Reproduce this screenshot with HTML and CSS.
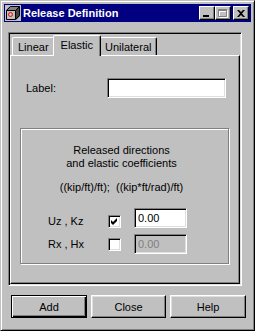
FILE: index.html
```html
<!DOCTYPE html>
<html>
<head>
<meta charset="utf-8">
<link rel="stylesheet" href="styles.css">
</head>
<body>
<div class="window">
  <div class="titlebar">
    <svg class="app-icon" width="16" height="16" viewBox="0 0 16 16">
      <rect x="0" y="0" width="16" height="16" fill="#c0c0c0"/>
      <path d="M1 5 L5 1 H15 L11 5 Z" fill="#808080"/>
      <path d="M11 5 L15 1 V11 L11 15 Z" fill="#404040"/>
      <path d="M1.5 5.5 H10.5 V14.5 H1.5 Z" fill="#c0c0c0" stroke="#000"/>
      <path d="M1.5 5.5 L5.5 1.5 H14.5 V10.5 L10.5 14.5 M10.5 5.5 L14.5 1.5" fill="none" stroke="#000"/>
      <circle cx="5.5" cy="9.5" r="2" fill="none" stroke="#ff0000"/>
    </svg>
    <span class="title">Release Definition</span>
    <div class="tb-buttons">
      <div class="tb-btn">
        <svg width="8" height="7" viewBox="0 0 8 7"><rect x="0" y="5" width="6" height="2" fill="#000"/></svg>
      </div>
      <div class="tb-btn">
        <svg width="10" height="9" viewBox="0 0 10 9"><path d="M1.5 1.5 H9.5 V8.5 H1.5 Z M1 2.5 H10" fill="none" stroke="#fff"/><path d="M0.5 0.5 H8.5 V7.5 H0.5 Z M0 1.5 H9" fill="none" stroke="#808080"/></svg>
      </div>
      <div class="tb-btn tb-close">
        <svg width="8" height="7" viewBox="0 0 8 7"><path d="M0 0 H2 L4 2 L6 0 H8 L5 3.5 L8 7 H6 L4 5 L2 7 H0 L3 3.5 Z" fill="#000"/></svg>
      </div>
    </div>
  </div>
  <div class="client">
    <div class="frame">
      <div class="tabs">
        <div class="tab">Linear</div>
        <div class="tab tab-active">Elastic</div>
        <div class="tab">Unilateral</div>
      </div>
      <div class="page">
        <div class="label-row">
          <span class="label-text">Label:</span>
          <div class="edit edit-label"></div>
        </div>
        <div class="group">
          <div class="g-title">Released directions<br>and elastic coefficients</div>
          <div class="g-units">((kip/ft)/ft);&nbsp; ((kip*ft/rad)/ft)</div>
          <div class="row row-first">
            <span class="row-label">Uz , Kz</span>
            <div class="check">
              <svg width="7" height="7" viewBox="0 0 7 7"><path d="M0 2 L2 4 L6 0 V3 L2 7 L0 5 Z" fill="#000"/></svg>
            </div>
            <div class="edit edit-num">0.00</div>
          </div>
          <div class="row row-second">
            <span class="row-label">Rx , Hx</span>
            <div class="check"></div>
            <div class="edit edit-num edit-disabled">0.00</div>
          </div>
        </div>
      </div>
    </div>
    <div class="buttons">
      <div class="btn btn-default">Add</div>
      <div class="btn btn-mid">Close</div>
      <div class="btn">Help</div>
    </div>
  </div>
</div>
</body>
</html>
```

FILE: styles.css
```css
body {
  margin: 0;
  font-family: "Liberation Sans", Arial, sans-serif;
  font-size: 11px;
  color: #000;
  background: #c0c0c0;
}

.window {
  width: 255px;
  height: 331px;
  box-sizing: border-box;
  background: #c0c0c0;
  border: 1px solid;
  border-color: #c0c0c0 #000 #000 #c0c0c0;
  box-shadow: inset 1px 1px #fff, inset -1px -1px #808080;
  padding: 3px;
  display: flex;
  flex-direction: column;
}

.titlebar {
  height: 18px;
  flex: none;
  background: #000080;
  display: flex;
  align-items: center;
  color: #fff;
  font-weight: bold;
  font-size: 11px;
}

.app-icon {
  display: block;
  margin-left: 1px;
  margin-right: 2px;
}

.title {
  white-space: nowrap;
}

.tb-buttons {
  margin-left: auto;
  margin-right: 2px;
  display: flex;
}

.tb-btn {
  width: 16px;
  height: 14px;
  box-sizing: border-box;
  background: #c0c0c0;
  border: 1px solid;
  border-color: #fff #000 #000 #fff;
  box-shadow: inset -1px -1px #808080;
  display: flex;
  align-items: center;
  justify-content: center;
}

.tb-btn svg {
  display: block;
}

.tb-close {
  margin-left: 2px;
}

.client {
  flex: 1;
  display: flex;
  flex-direction: column;
}

.frame {
  margin: 10px 0 0 4px;
  width: 234px;
  height: 254px;
  box-sizing: border-box;
  border: 1px solid;
  border-color: #808080 #fff #fff #808080;
  box-shadow: inset 1px 1px #000, inset -1px -1px #dfdfdf;
  padding: 1px;
  display: flex;
  flex-direction: column;
}

.tabs {
  height: 21px;
  flex: none;
  display: flex;
  align-items: flex-end;
  padding-left: 2px;
}

.tab {
  height: 18px;
  box-sizing: border-box;
  padding: 0 5px;
  border-top: 1px solid #fff;
  border-left: 1px solid #fff;
  border-right: 1px solid #000;
  border-radius: 2px 2px 0 0;
  box-shadow: inset -1px 0 #808080;
  background: #c0c0c0;
  display: flex;
  align-items: center;
  white-space: nowrap;
}

.tab-active {
  height: 21px;
  margin: 0 -2px -1px -2px;
  padding: 0 7px 2px 7px;
  position: relative;
  z-index: 1;
}

.page {
  flex: 1;
  box-sizing: border-box;
  border: 1px solid;
  border-color: #fff #000 #000 #fff;
  box-shadow: inset -1px -1px #808080;
  padding: 22px 0 0 15px;
}

.label-row {
  display: flex;
  align-items: center;
  height: 20px;
}

.label-text {
  width: 81px;
}

.edit {
  box-sizing: border-box;
  height: 20px;
  background: #fff;
  border: 1px solid;
  border-color: #808080 #fff #fff #808080;
  box-shadow: inset 1px 1px #000, inset -1px -1px #dfdfdf;
  padding: 0 3px;
  display: flex;
  align-items: center;
}

.edit-label {
  width: 119px;
}

.group {
  margin: 30px 0 0 -6px;
  width: 209px;
  height: 136px;
  box-sizing: border-box;
  border: 1px solid #808080;
  box-shadow: inset 1px 1px #fff, 1px 1px #fff;
  padding-top: 15px;
}

.g-title {
  text-align: center;
  line-height: 13px;
  padding-right: 6px;
}

.g-units {
  text-align: center;
  line-height: 13px;
  margin-top: 11px;
  padding-right: 6px;
}

.row {
  display: flex;
  height: 20px;
  margin-left: 27px;
}

.row-first {
  margin-top: 14px;
  align-items: flex-end;
}

.row-second {
  margin-top: 6px;
  align-items: center;
}

.row-label {
  width: 60px;
  line-height: 13px;
  white-space: nowrap;
}

.check {
  width: 13px;
  height: 13px;
  box-sizing: border-box;
  background: #fff;
  border: 1px solid;
  border-color: #808080 #fff #fff #808080;
  box-shadow: inset 1px 1px #000, inset -1px -1px #dfdfdf;
  margin-right: 13px;
  display: flex;
  align-items: center;
  justify-content: center;
}

.check svg {
  display: block;
}

.edit-num {
  width: 53px;
}

.edit-disabled {
  background: #c0c0c0;
  color: #808080;
}

.buttons {
  display: flex;
  margin: 9px 0 0 7px;
  gap: 4px;
}

.btn {
  width: 76px;
  height: 23px;
  box-sizing: border-box;
  border: 1px solid;
  border-color: #fff #000 #000 #fff;
  box-shadow: inset -1px -1px #808080, inset 1px 1px #dfdfdf;
  display: flex;
  align-items: center;
  justify-content: center;
}

.btn-mid {
  width: 75px;
}

.btn-default {
  border-color: #000;
  box-shadow: inset 1px 1px #fff, inset -1px -1px #000, inset -2px -2px #808080;
}
```
